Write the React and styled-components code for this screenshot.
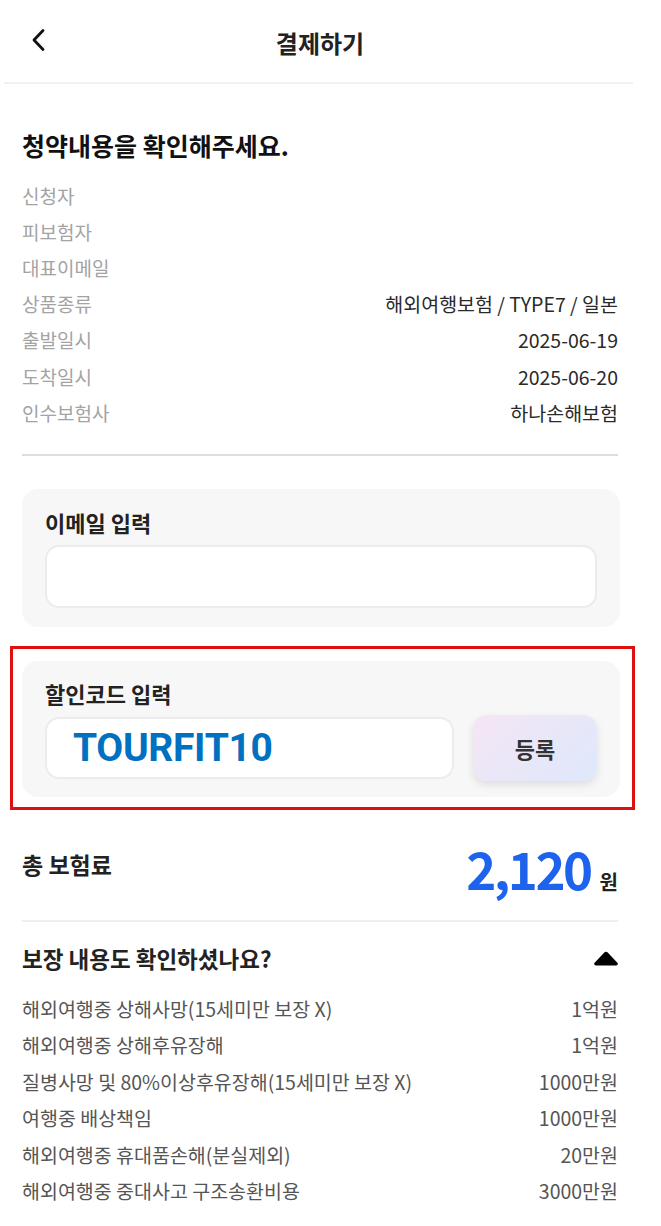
import React from 'react';
import styled, { createGlobalStyle } from 'styled-components';

const GlobalStyle = createGlobalStyle`
  html, body {
    margin: 0;
    padding: 0;
    background: #fff;
  }
  body {
    font-family: "Noto Sans CJK KR", "Noto Sans", sans-serif;
    color: #222;
  }
`;

const summary = [
  ['신청자', ''],
  ['피보험자', ''],
  ['대표이메일', ''],
  ['상품종류', '해외여행보험 / TYPE7 / 일본'],
  ['출발일시', '2025-06-19'],
  ['도착일시', '2025-06-20'],
  ['인수보험사', '하나손해보험'],
];

const coverage = [
  ['해외여행중 상해사망(15세미만 보장 X)', '1억원'],
  ['해외여행중 상해후유장해', '1억원'],
  ['질병사망 및 80%이상후유장해(15세미만 보장 X)', '1000만원'],
  ['여행중 배상책임', '1000만원'],
  ['해외여행중 휴대품손해(분실제외)', '20만원'],
  ['해외여행중 중대사고 구조송환비용', '3000만원'],
];

const App = () => {
  return (
    <Page>
      <GlobalStyle />
      <Header>
        <BackButton aria-label="뒤로">
          <svg width="18" height="24" viewBox="0 0 18 24">
            <polyline points="13,2.5 4,12 13,21.5" fill="none" stroke="#111" strokeWidth="2.8" strokeLinecap="round" strokeLinejoin="round" />
          </svg>
        </BackButton>
        <HeaderTitle>결제하기</HeaderTitle>
      </Header>

      <Content>
        <SectionTitle>청약내용을 확인해주세요.</SectionTitle>
        <InfoList>
          {summary.map(([label, value]) => (
            <InfoRow key={label}>
              <InfoLabel>{label}</InfoLabel>
              <InfoValue>{value}</InfoValue>
            </InfoRow>
          ))}
        </InfoList>
        <Divider $strong />

        <Card $top={33}>
          <CardTitle>이메일 입력</CardTitle>
          <EmailInput type="text" />
        </Card>

        <Highlight>
          <Card $compact>
            <CardTitle>할인코드 입력</CardTitle>
            <InputRow>
              <CodeInput type="text" defaultValue="TOURFIT10" />
              <RegisterButton>등록</RegisterButton>
            </InputRow>
          </Card>
        </Highlight>

        <TotalRow>
          <TotalLabel>총 보험료</TotalLabel>
          <TotalAmount>
            <AmountNumber>2,120</AmountNumber>
            <AmountUnit>원</AmountUnit>
          </TotalAmount>
        </TotalRow>
        <Divider />

        <AccordionHeader>
          <AccordionTitle>보장 내용도 확인하셨나요?</AccordionTitle>
          <svg width="26" height="15" viewBox="0 0 26 15">
            <path d="M11.3 1.6 a2 2 0 0 1 3.4 0 L24.6 12 a1.6 1.6 0 0 1 -1.3 2.4 H2.7 a1.6 1.6 0 0 1 -1.3 -2.4 Z" fill="#000" />
          </svg>
        </AccordionHeader>
        <CoverageList>
          {coverage.map(([label, value]) => (
            <CoverageRow key={label}>
              <span>{label}</span>
              <span>{value}</span>
            </CoverageRow>
          ))}
        </CoverageList>
      </Content>
    </Page>
  );
};

export default App;

const Page = styled.div`
  width: 640px;
  min-height: 1226px;
  background: #fff;
`;

const Header = styled.header`
  position: relative;
  height: 82px;
  margin: 0 7px 0 4px;
  display: flex;
  align-items: center;
  justify-content: center;
  border-bottom: 2px solid #f1f1f1;
`;

const BackButton = styled.button`
  position: absolute;
  left: 26px;
  top: 28px;
  padding: 0;
  border: 0;
  background: none;
  display: flex;
`;

const HeaderTitle = styled.h1`
  margin: 2px 0 0 3px;
  font-size: 24px;
  font-weight: 700;
  color: #222;
`;

const Content = styled.main`
  padding: 0 20px 0 22px;
`;

const SectionTitle = styled.h2`
  margin: 46px 0 17px;
  font-size: 25px;
  line-height: 30px;
  font-weight: 700;
  color: #111;
`;

const InfoList = styled.div`
  display: flex;
  flex-direction: column;
  padding-right: 2px;
`;

const InfoRow = styled.div`
  display: flex;
  justify-content: space-between;
  align-items: center;
  height: 36.2px;
  font-size: 19px;
`;

const InfoLabel = styled.span`
  color: #a3a3a3;
`;

const InfoValue = styled.span`
  color: #2a2a2a;
  font-size: 19.5px;
`;

const Divider = styled.hr`
  margin: ${({ $strong }) => ($strong ? '24px 2px 0 0' : '0 2px 0 0')};
  border: 0;
  height: 2px;
  background: ${({ $strong }) => ($strong ? '#dedede' : '#eeeeee')};
`;

const Card = styled.section`
  margin-top: ${({ $top }) => ($top ? `${$top}px` : '0')};
  padding: ${({ $compact }) => ($compact ? '19px 23px 16px' : '20px 23px 19px')};
  background: #f7f7f7;
  border-radius: 16px;
  display: flex;
  flex-direction: column;
  gap: ${({ $compact }) => ($compact ? '9px' : '10px')};
`;

const CardTitle = styled.h3`
  margin: 0;
  font-size: 22px;
  line-height: 26px;
  font-weight: 700;
  color: #222;
`;

const EmailInput = styled.input`
  box-sizing: border-box;
  width: 100%;
  height: 63px;
  padding: 0 26px;
  border: 2px solid #ececec;
  border-radius: 14px;
  background: #fff;
  outline: none;
  font-family: "Noto Sans CJK KR", sans-serif;
  font-size: 20px;
`;

const CodeInput = styled(EmailInput)`
  flex: 1;
  min-width: 0;
  height: 62px;
  font-family: Roboto, "Noto Sans", sans-serif;
  font-size: 39px;
  font-weight: 700;
  letter-spacing: -0.3px;
  color: #0070c0;
`;

const InputRow = styled.div`
  display: flex;
  align-items: center;
  gap: 19px;
`;

const RegisterButton = styled.button`
  width: 124px;
  height: 66px;
  flex-shrink: 0;
  border: 0;
  border-radius: 14px;
  background: linear-gradient(135deg, #f6e5f4 0%, #e9e7f8 50%, #dee8fb 100%);
  box-shadow: 0 4px 8px rgba(0, 0, 0, 0.1);
  font-family: "Noto Sans CJK KR", sans-serif;
  font-size: 22px;
  font-weight: 700;
  color: #333;
`;

const Highlight = styled.div`
  margin: 19px -15px 0 -12px;
  padding: 12px 12px 10px 9px;
  border: 3px solid #e01010;
`;

const TotalRow = styled.div`
  display: flex;
  justify-content: space-between;
  align-items: center;
  height: 110px;
  padding-right: 2px;
`;

const TotalLabel = styled.span`
  font-size: 23px;
  font-weight: 700;
  color: #222;
  margin-top: -2px;
`;

const TotalAmount = styled.div`
  display: flex;
  align-items: baseline;
  gap: 9px;
  margin-top: 6px;
`;

const AmountNumber = styled.span`
  font-size: 51px;
  font-weight: 700;
  color: #1e63ee;
  letter-spacing: -2.5px;
`;

const AmountUnit = styled.span`
  font-size: 20px;
  font-weight: 700;
  color: #222;
`;

const AccordionHeader = styled.div`
  display: flex;
  justify-content: space-between;
  align-items: center;
  height: 64px;
  padding: 4px 1px 0 0;
`;

const AccordionTitle = styled.span`
  font-size: 22.5px;
  font-weight: 700;
  color: #222;
`;

const CoverageList = styled.div`
  display: flex;
  flex-direction: column;
  padding-right: 2px;
`;

const CoverageRow = styled.div`
  display: flex;
  justify-content: space-between;
  align-items: center;
  height: 36.4px;
  font-size: 19.5px;
  color: #555;
`;
